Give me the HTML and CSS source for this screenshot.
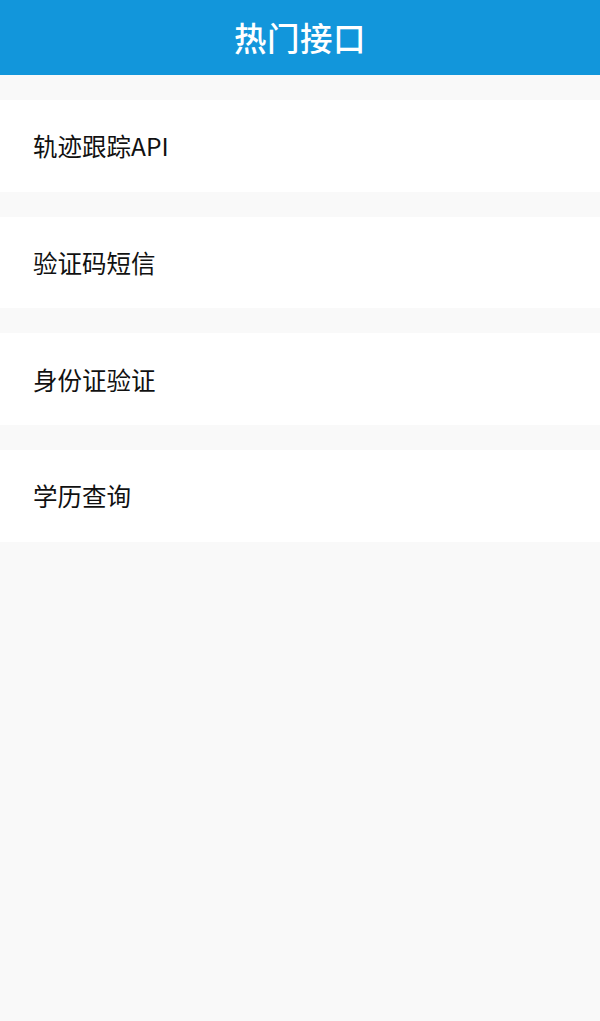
FILE: index.html
```html
<!DOCTYPE html>
<html lang="zh-CN">
<head>
<meta charset="utf-8">
<title>热门接口</title>
<link rel="stylesheet" href="styles.css">
</head>
<body>
<header class="topbar"><h1 class="title">热门接口</h1></header>
<main class="list">
  <div class="item">轨迹跟踪API</div>
  <div class="item">验证码短信</div>
  <div class="item">身份证验证</div>
  <div class="item">学历查询</div>
</main>
</body>
</html>
```
FILE: styles.css
```css
html, body {
  margin: 0;
  padding: 0;
  height: 100%;
}
body {
  background: #f9f9f9;
  font-family: "Noto Sans CJK SC", "Noto Sans", sans-serif;
  color: #111;
}
.topbar {
  height: 75px;
  background: #1296db;
  display: flex;
  align-items: center;
  justify-content: center;
}
.title {
  margin: 0;
  color: #fff;
  font-size: 32.5px;
  font-weight: 500;
  line-height: 1;
  letter-spacing: 0.5px;
}
.list {
  display: flex;
  flex-direction: column;
  gap: 25px;
  padding-top: 25px;
}
.item {
  height: 91.7px;
  background: #fff;
  display: flex;
  align-items: center;
  padding-left: 33px;
  font-size: 24.5px;
  font-weight: 400;
  color: #111;
}
```
